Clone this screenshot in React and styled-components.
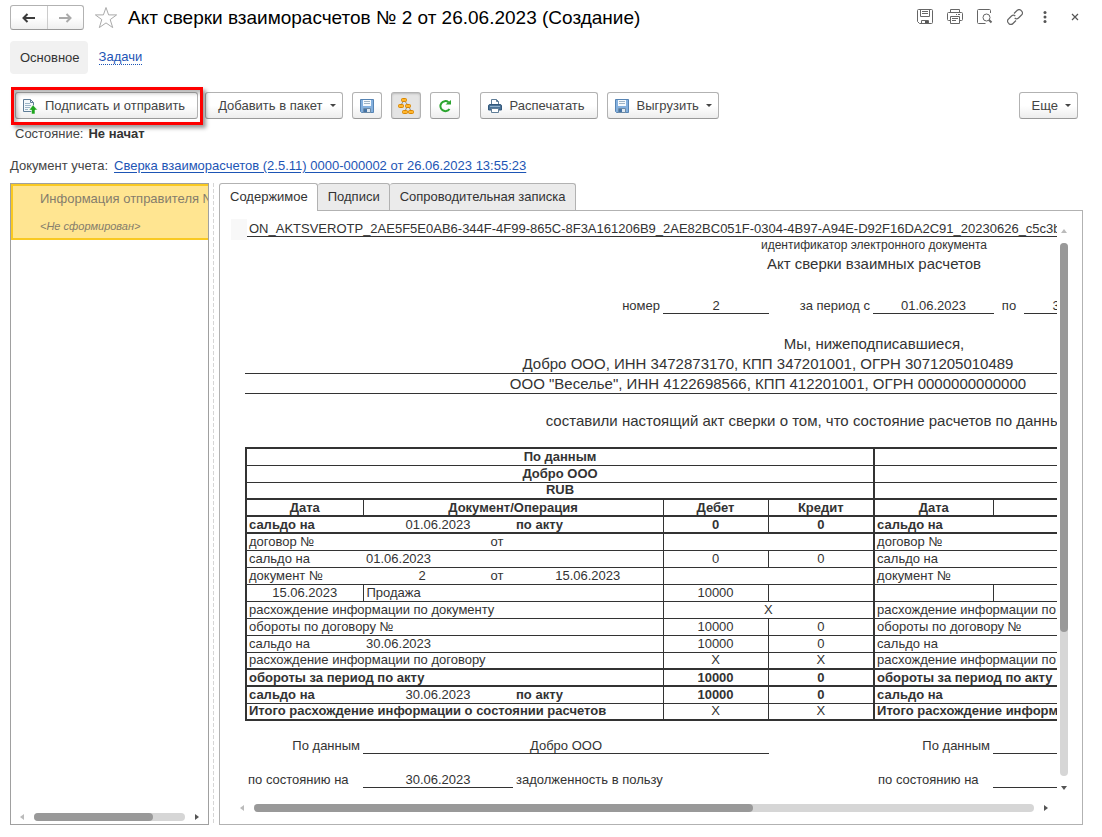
import React from 'react';
import styled, { createGlobalStyle, css } from 'styled-components';

const colorText = '#444444';
const colorSheet = '#333333';
const colorLink = '#1d55b5';
const colorBorder = '#b2b2b2';

const GlobalStyle = createGlobalStyle`
  * {
    box-sizing: border-box;
  }

  body {
    margin: 0;
    background: #ffffff;
    color: ${colorText};
    font-family: 'Liberation Sans', Arial, sans-serif;
    font-size: 13px;
  }

  button {
    font-family: inherit;
    color: inherit;
  }
`;

const Page = styled.div`
  display: flex;
  flex-direction: column;
  height: 100vh;
  min-height: 600px;
  padding: 5px 19px 12px 10px;
`;

// Title bar
const Header = styled.header`
  display: flex;
  align-items: center;
  height: 25px;
`;

const NavGroup = styled.div`
  display: flex;
  width: 74px;
  height: 25px;
  border: 1px solid ${colorBorder};
  border-bottom-color: #999999;
  border-radius: 3px;
  background: linear-gradient(#ffffff 50%, #efefef);
`;

const NavButton = styled.button`
  display: flex;
  flex: 1;
  align-items: center;
  justify-content: center;
  padding: 0;
  border: 0;
  background: none;

  & + & {
    border-left: 1px solid #cccccc;
  }
`;

const StarButton = styled.button`
  display: flex;
  margin: 0 10px;
  padding: 0;
  border: 0;
  background: none;
`;

const Title = styled.h1`
  flex: 1;
  margin: 0;
  color: #000000;
  font-size: 19px;
  font-weight: normal;
  line-height: 24px;
  white-space: nowrap;
`;

const HeaderTools = styled.div`
  display: flex;
  gap: 10px;
  margin: 0 -2px 2px 0;
`;

const HeaderTool = styled.button`
  display: flex;
  align-items: center;
  justify-content: center;
  width: 20px;
  height: 20px;
  padding: 0;
  border: 0;
  background: none;
`;

// Form navigation
const Sections = styled.nav`
  display: flex;
  align-items: center;
  gap: 11px;
  margin-top: 11px;
`;

const SectionCurrent = styled.span`
  padding: 0 8px 0 10px;
  border-radius: 4px;
  background: #f1f1f1;
  color: #333333;
  line-height: 33px;
`;

const SectionLink = styled.a`
  border-bottom: 1px dotted ${colorLink};
  color: ${colorLink};
  line-height: 14px;
  text-decoration: none;
`;

// Command bar
const Toolbar = styled.div`
  display: flex;
  gap: 9px;
  margin-top: 18px;
  padding: 0 5px;
`;

const ToolButton = styled.button`
  display: flex;
  align-items: center;
  justify-content: center;
  gap: 7px;
  height: 27px;
  padding: 0 ${({ $icon }) => ($icon ? '6px' : '12px')};
  border: 1px solid ${colorBorder};
  border-bottom-color: #999999;
  border-radius: 3px;
  background: linear-gradient(#ffffff 50%, #ededed);
  font-size: 13px;
  white-space: nowrap;

  ${({ $wide }) =>
    $wide &&
    css`
      padding-right: 12px;
    `}

  ${({ $menu }) =>
    $menu &&
    css`
      padding-right: 6px;
    `}

  ${({ $pressed }) =>
    $pressed &&
    css`
      background: #e4e4e4;
      box-shadow: inset 0 1px 2px #bbbbbb;
    `}
`;

const Caret = styled.span`
  border: 3px solid transparent;
  border-top-color: #444444;
  border-bottom-width: 0;
`;

const Highlighted = styled.div`
  position: relative;
  display: flex;
  margin-right: -2px;

  &::after {
    content: '';
    position: absolute;
    inset: -5px -5px -6px -4px;
    border: 3px solid #fe0000;
    box-shadow: 3px 3px 4px rgba(0, 0, 0, 0.4), inset 3px 3px 4px rgba(0, 0, 0, 0.3);
    pointer-events: none;
  }
`;

const ToolbarGap = styled.div`
  width: 2px;
`;

const ToolbarEnd = styled.div`
  margin-left: auto;
`;

const StateLine = styled.div`
  display: flex;
  gap: 5px;
  margin-top: 7px;
  padding-left: 5px;
  line-height: 16px;

  strong {
    color: #333333;
  }
`;

const DocumentLine = styled.div`
  display: flex;
  gap: 6px;
  margin-top: 16px;
  line-height: 16px;
  white-space: nowrap;

  a {
    color: ${colorLink};
    text-underline-offset: 2px;
  }
`;

// Working area
const Workspace = styled.main`
  display: grid;
  grid-template-columns: 199px 10px minmax(0, 1fr);
  flex: 1;
  min-height: 0;
  margin-top: 9px;
`;

const ListPanel = styled.section`
  display: flex;
  flex-direction: column;
  justify-content: space-between;
  min-width: 0;
  border: 1px solid #a0a0a0;
`;

const ListItem = styled.div`
  height: 56px;
  padding: 5px 0 0 27px;
  overflow: hidden;
  border: 2px solid #f9c922;
  border-right: 0;
  background: #ffe591;
  color: #857d6c;
  line-height: 16px;
  white-space: nowrap;

  em {
    display: block;
    margin-top: 11px;
    font-size: 11px;
  }
`;

const Splitter = styled.div`
  width: 1px;
  margin-left: 4px;
  background: repeating-linear-gradient(#d6d6d6 0 4px, transparent 4px 6px);
`;

const Content = styled.section`
  display: flex;
  flex-direction: column;
  min-width: 0;
  min-height: 0;
`;

const Tabs = styled.div`
  display: flex;
  height: 27px;
`;

const Tab = styled.button`
  height: 27px;
  padding: 0 9px 2px 10px;
  border: 1px solid ${colorBorder};
  border-bottom: 0;
  border-left-width: ${({ $active }) => ($active ? '1px' : '0')};
  border-radius: 3px 3px 0 0;
  background: #ebebeb;
  color: #333333;
  font-size: 13px;
  white-space: nowrap;

  ${({ $active }) =>
    $active &&
    css`
      z-index: 1;
      height: 28px;
      background: #ffffff;
    `}
`;

const SheetFrame = styled.div`
  display: grid;
  grid-template-columns: minmax(0, 1fr) 14px;
  grid-template-rows: minmax(0, 1fr) 28px;
  flex: 1;
  min-height: 0;
  padding: 8px 11px 2px;
  border: 1px solid ${colorBorder};
`;

const Viewport = styled.div`
  overflow: hidden;
`;

// Scroll bars
const Scrollbar = styled.div`
  display: flex;
  flex-direction: ${({ $vertical }) => ($vertical ? 'column' : 'row')};
  align-items: center;
  gap: 10px;
  padding: ${({ $vertical }) => ($vertical ? '10px 0 4px' : '0 9px')};
`;

const ListScrollbar = styled(Scrollbar)`
  height: 14px;
`;

const ScrollTrack = styled.div`
  flex: 1;
  width: ${({ $vertical }) => ($vertical ? '8px' : 'auto')};
  height: ${({ $vertical }) => ($vertical ? 'auto' : '8px')};
  border-radius: 4px;
  background: #d6d6d6;
`;

const ScrollThumb = styled.div`
  width: ${({ $vertical, $size }) => ($vertical ? '8px' : $size)};
  height: ${({ $vertical, $size }) => ($vertical ? $size : '8px')};
  border-radius: 4px;
  background: #999999;
`;

const arrowShapes = {
  left: 'M4 0v6L0 3z',
  right: 'M0 0v6l4-3z',
  up: 'M0 4h6L3 0z',
  down: 'M0 0h6L3 4z',
};

const ScrollArrow = ({ side, muted }) => {
  const vertical = side === 'up' || side === 'down';
  return (
    <svg width={vertical ? 6 : 4} height={vertical ? 4 : 6} aria-hidden="true">
      <path d={arrowShapes[side]} fill={muted ? '#bbbbbb' : '#555555'} />
    </svg>
  );
};

// Printed form
const Sheet = styled.article`
  width: 1272px;
  padding-left: 14px;
  color: ${colorSheet};
`;

const SheetLine = styled.div`
  height: ${({ $height }) => $height || 20}px;
  margin-top: ${({ $gap }) => $gap || 0}px;
  font-size: 15px;
  line-height: 19px;
  text-align: center;
  white-space: nowrap;
`;

const SheetId = styled(SheetLine)`
  position: relative;
  border-bottom: 1px solid ${colorSheet};
  padding-left: 4px;
  font-size: 13px;
  text-align: left;

  &::before {
    content: '';
    position: absolute;
    top: 0;
    left: -14px;
    width: 16px;
    height: 21px;
    background: #f8f8f8;
  }
`;

const SheetCaption = styled(SheetLine)`
  font-size: 12px;
  line-height: 16px;
`;

const Party = styled(SheetLine)`
  width: 1046px;
  border-bottom: 1px solid ${colorSheet};
`;

const Fields = styled.div`
  display: grid;
  grid-template-columns: ${({ $columns }) => $columns};
  margin-top: ${({ $gap }) => $gap}px;
  line-height: 19px;
  white-space: nowrap;
`;

const Field = styled.span`
  height: 18px;
  padding: 0 3px;
  text-align: ${({ $align }) => $align || 'left'};
  border-bottom: ${({ $line }) => ($line ? `1px solid ${colorSheet}` : '0')};
`;

const Ledger = styled.table`
  width: 1258px;
  margin-top: 16px;
  border: 2px solid ${colorSheet};
  border-collapse: collapse;
  table-layout: fixed;
  font-size: 13px;
  line-height: 14px;
`;

const Row = styled.tr`
  height: 17px;
  border-top: ${({ $thick }) => ($thick ? '2px' : '1px')} solid ${colorSheet};
`;

const Cell = styled.td`
  padding: 0 ${({ $edge }) => ($edge ? '2px' : '3px')};
  font-weight: ${({ $bold }) => ($bold ? 'bold' : 'normal')};
  text-align: ${({ $align }) => $align || 'left'};
  white-space: nowrap;
  border-left: ${({ $edge, $line }) => {
    if ($edge) return `2px solid ${colorSheet}`;
    return $line ? `1px solid ${colorSheet}` : '0';
  }};
`;

const columnWidths = [117, 118, 32, 150, 105, 106, 119, 118, 32, 150, 105, 104];

// Short builders for the cells of one half of the table
const left = (text, span = 1, extra) => ({ text, span, ...extra });
const mid = (text, span = 1, extra) => ({ text, span, align: 'center', ...extra });
const sum = (text, span = 1, extra) => mid(text, span, { line: true, ...extra });
const bold = { bold: true };

const ledgerRows = ({ from, to, number, date, operation, amount, zero }) => [
  { thick: true, cells: [left('сальдо на', 1, bold), mid(from, 2), left(from && 'по акту', 1, bold), sum(zero, 1, bold), sum(zero, 1, bold)] },
  { thick: true, cells: [left('договор №'), mid(''), mid(from && 'от'), mid(''), sum('', 2)] },
  { cells: [left('сальдо на'), left(from, 3), sum(zero), sum(zero)] },
  { cells: [left('документ №'), mid(number), mid(from && 'от'), mid(date), sum('', 2)] },
  { cells: [mid(date), left(operation, 3, { line: true }), sum(amount), sum('')] },
  { cells: [left('расхождение информации по документу', 4), sum(from && 'X', 2)] },
  { cells: [left('обороты по договору №', 4), sum(amount), sum(zero)] },
  { cells: [left('сальдо на'), left(to, 3), sum(amount), sum(zero)] },
  { cells: [left('расхождение информации по договору', 4), sum(from && 'X'), sum(from && 'X')] },
  { thick: true, cells: [left('обороты за период по акту', 4, bold), sum(amount, 1, bold), sum(zero, 1, bold)] },
  { thick: true, cells: [left('сальдо на', 1, bold), mid(to, 2), left(to && 'по акту', 1, bold), sum(amount, 1, bold), sum(zero, 1, bold)] },
  { cells: [left('Итого расхождение информации о состоянии расчетов', 4, bold), sum(from && 'X'), sum(from && 'X')] },
];

const ourRows = [
  { thick: true, cells: [mid('По данным', 6, bold)] },
  { cells: [mid('Добро ООО', 6, bold)] },
  { cells: [mid('RUB', 6, bold)] },
  { thick: true, cells: [mid('Дата', 1, bold), sum('Документ/Операция', 3, bold), sum('Дебет', 1, bold), sum('Кредит', 1, bold)] },
  ...ledgerRows({
    from: '01.06.2023',
    to: '30.06.2023',
    number: '2',
    date: '15.06.2023',
    operation: 'Продажа',
    amount: '10000',
    zero: '0',
  }),
];

// The other side has not filled in its half yet
const theirRows = [
  { cells: [mid('', 6)] },
  { cells: [mid('', 6)] },
  { cells: [mid('', 6)] },
  { cells: [mid('Дата', 1, bold), sum('', 3), sum(''), sum('')] },
  ...ledgerRows({ from: '', to: '', number: '', date: '', operation: '', amount: '', zero: '' }),
];

const renderCells = (cells, half) =>
  cells.map((cell, index) => (
    <Cell
      key={`${half}-${index}`}
      colSpan={cell.span}
      $edge={index === 0}
      $line={cell.line}
      $bold={cell.bold}
      $align={cell.align}
    >
      {cell.text}
    </Cell>
  ));

const LedgerTable = () => (
  <Ledger>
    <colgroup>
      {columnWidths.map((width, index) => (
        <col key={index} width={width} />
      ))}
    </colgroup>
    <tbody>
      {ourRows.map((row, index) => (
        <Row key={index} $thick={row.thick}>
          {renderCells(row.cells, 'our')}
          {renderCells(theirRows[index].cells, 'their')}
        </Row>
      ))}
    </tbody>
  </Ledger>
);

// Icons
const ArrowIcon = ({ back }) => (
  <svg width="16" height="12" viewBox="0 0 16 12" aria-hidden="true">
    {back ? (
      <path d="M6.500 2L2.500 6l4 4M2.500 6H14" fill="none" stroke="#3c3c3c" strokeWidth="2" />
    ) : (
      <path d="M9.500 2l4 4-4 4M13.500 6H2" fill="none" stroke="#aaaaaa" strokeWidth="2" />
    )}
  </svg>
);

const StarIcon = () => (
  <svg width="24" height="24" viewBox="0 0 24 24" aria-hidden="true">
    <path
      d="M12 1.500l2.600 7.400h8L16.200 13.600l2.500 8L12 16.900l-6.700 4.700 2.500-8L1.400 8.900h8z"
      fill="none"
      stroke="#aaaaaa"
      strokeWidth="1"
    />
  </svg>
);

const SaveOutlineIcon = () => (
  <svg width="16" height="16" viewBox="0 0 16 16" fill="none" stroke="#666666" aria-hidden="true">
    <path d="M1.500 0.500h13a1 1 0 0 1 1 1v12a1 1 0 0 1-1 1h-12l-2-2v-11a1 1 0 0 1 1-1z" />
    <path d="M3.500 0.500v7h9v-7M5 2.500h6M5 4.500h6M4.500 14.500v-3h7v3" />
    <path d="M8 12h3v2H8z" fill="#555555" stroke="none" />
  </svg>
);

const PrintOutlineIcon = () => (
  <svg width="16" height="16" viewBox="0 0 16 16" fill="none" stroke="#666666" aria-hidden="true">
    <path d="M3.500 3.500v-3h9v3M3.500 11.500h-2a1 1 0 0 1-1-1v-6a1 1 0 0 1 1-1h13a1 1 0 0 1 1 1v6a1 1 0 0 1-1 1h-2" />
    <path d="M3.500 7.500h9v7h-9zM5 9.500h6M5 11.500h4M9 5.500h1M11 5.500h2" />
  </svg>
);

const PreviewIcon = () => (
  <svg width="16" height="16" viewBox="0 0 16 16" fill="none" stroke="#666666" aria-hidden="true">
    <path d="M13.500 4v-2.500a1 1 0 0 0-1-1h-11a1 1 0 0 0-1 1v12a1 1 0 0 0 1 1h7" />
    <circle cx="9.500" cy="8.500" r="3.500" />
    <path d="M12 11l2.500 2.500" strokeWidth="2" />
  </svg>
);

const LinkIcon = () => (
  <svg width="16" height="16" viewBox="0 0 16 16" fill="none" stroke="#666666" strokeWidth="1.200" aria-hidden="true">
    <path d="M7 4.500l3-3a2.700 2.700 0 0 1 4.300 0.200 2.700 2.700 0 0 1 0.200 4.300l-3 3a2.700 2.700 0 0 1-3.800 0" />
    <path d="M9 11.500l-3 3a2.700 2.700 0 0 1-4.300-0.200A2.700 2.700 0 0 1 1.500 10l3-3a2.700 2.700 0 0 1 3.800 0" />
  </svg>
);

const DotsIcon = () => (
  <svg width="4" height="12" viewBox="0 0 4 12" fill="#555555" aria-hidden="true">
    <circle cx="2" cy="1.500" r="1.500" />
    <circle cx="2" cy="6" r="1.500" />
    <circle cx="2" cy="10.500" r="1.500" />
  </svg>
);

const CloseIcon = () => (
  <svg width="8" height="8" viewBox="0 0 8 8" aria-hidden="true">
    <path d="M1 1l6 6M7 1l-6 6" stroke="#555555" strokeWidth="1.200" />
  </svg>
);

const SendIcon = () => (
  <svg width="16" height="16" viewBox="0 0 16 16" aria-hidden="true">
    <path d="M1.500 1.500h7l3 3v9h-10z" fill="#f4f8fb" stroke="#5f7d97" />
    <path d="M8.500 1.500v3h3" fill="none" stroke="#5f7d97" />
    <path d="M3 5.500h5M3 7.500h6M3 9.500h5M3 11.500h3" stroke="#9db5c8" />
    <path d="M11 7l4.500 5H13v4H9.500v-4H7z" fill="#1fa51f" stroke="#ffffff" strokeWidth="0.500" />
  </svg>
);

const FloppyIcon = () => (
  <svg width="16" height="16" viewBox="0 0 16 16" aria-hidden="true">
    <path d="M1.500 1.500h13v13h-12l-1-1z" fill="#84b0de" stroke="#5684b4" />
    <path d="M4 2h8v6H4z" fill="#f6fafd" />
    <path d="M5 3.500h6M5 5.500h6" stroke="#9fb4c6" />
    <path d="M4.500 10.500h7v4h-7z" fill="#dfe8f0" stroke="#6c8aa6" />
    <path d="M5 11h3v3H5z" fill="#4473a6" />
  </svg>
);

const StructureIcon = () => (
  <svg width="16" height="16" viewBox="0 0 16 16" aria-hidden="true">
    <path d="M5.500 3L3 7M6.500 3l3.500 4M9.500 8L7 13M10.500 8l2.500 5" stroke="#8c8c8c" fill="none" />
    <g fill="#ffb62e" stroke="#d98600">
      <rect x="3.500" y="0.500" width="5" height="3" rx="1" />
      <rect x="0.500" y="6.500" width="5" height="3" rx="1" />
      <rect x="7.500" y="6.500" width="5" height="3" rx="1" />
      <rect x="4.500" y="12.500" width="5" height="3" rx="1" />
      <rect x="10.500" y="12.500" width="5" height="3" rx="1" />
    </g>
  </svg>
);

const RefreshIcon = () => (
  <svg width="16" height="16" viewBox="0 0 16 16" aria-hidden="true">
    <path d="M12.500 11A5 5 0 1 1 11.500 4.200" fill="none" stroke="#2ba52f" strokeWidth="2" />
    <path d="M8.500 6.500H14V2z" fill="#2ba52f" />
  </svg>
);

const PrinterIcon = () => (
  <svg width="16" height="16" viewBox="0 0 16 16" aria-hidden="true">
    <path d="M4.500 7V1.500h5l2 2V7" fill="#ffffff" stroke="#5f7d97" />
    <path d="M9.500 1.500v2h2" fill="none" stroke="#5f7d97" />
    <path d="M3 6.500h10a1.500 1.500 0 0 1 1.500 1.500v4h-13v-4a1.500 1.500 0 0 1 1.500-1.500z" fill="#4b7296" stroke="#34597c" />
    <path d="M3 8.500h10" stroke="#8fb0cb" />
    <path d="M4.500 10.500h7v4h-7z" fill="#ffffff" stroke="#5f7d97" />
  </svg>
);

const HalfTotals = ({ company }) => (
  <Fields $gap={0} $columns="118px 406px 105px">
    <Field $align="right">По данным</Field>
    <Field $align="center" $line>{company}</Field>
  </Fields>
);

const HalfDebt = ({ date, text }) => (
  <Fields $gap={0} $columns="118px 150px 361px">
    <Field>по состоянию на</Field>
    <Field $align="center" $line>{date}</Field>
    <Field>{text}</Field>
  </Fields>
);

const PrintedForm = () => (
  <Sheet>
    <SheetId $height={18}>
      ON_AKTSVEROTP_2AE5F5E0AB6-344F-4F99-865C-8F3A161206B9_2AE82BC051F-0304-4B97-A94E-D92F16DA2C91_20230626_c5c3b63
    </SheetId>
    <SheetCaption $height={17}>идентификатор электронного документа</SheetCaption>
    <SheetLine>Акт сверки взаимных расчетов</SheetLine>
    <Fields $gap={22} $columns="418px 106px 104px 121px 30px 122px">
      <Field $align="right">номер</Field>
      <Field $align="center" $line>2</Field>
      <Field $align="right">за период с</Field>
      <Field $align="center" $line>01.06.2023</Field>
      <Field $align="center">по</Field>
      <Field $align="center" $line>30.06.2023</Field>
    </Fields>
    <SheetLine $gap={20}>Мы, нижеподписавшиеся,</SheetLine>
    <Party>Добро ООО, ИНН 3472873170, КПП 347201001, ОГРН 3071205010489</Party>
    <Party>ООО "Веселье", ИНН 4122698566, КПП 412201001, ОГРН 0000000000000</Party>
    <SheetLine $gap={17}>
      составили настоящий акт сверки о том, что состояние расчетов по данным учета следующее:
    </SheetLine>
    <LedgerTable />
    <Fields $gap={15} $columns="630px 628px">
      <HalfTotals company="Добро ООО" />
      <HalfTotals />
    </Fields>
    <Fields $gap={16} $columns="630px 628px">
      <HalfDebt date="30.06.2023" text="задолженность в пользу" />
      <HalfDebt />
    </Fields>
  </Sheet>
);

const App = () => {
  return (
    <>
      <GlobalStyle />
      <Page>
        <Header>
          <NavGroup>
            <NavButton aria-label="Назад"><ArrowIcon back /></NavButton>
            <NavButton aria-label="Вперед"><ArrowIcon /></NavButton>
          </NavGroup>
          <StarButton aria-label="Избранное"><StarIcon /></StarButton>
          <Title>Акт сверки взаиморасчетов № 2 от 26.06.2023 (Создание)</Title>
          <HeaderTools>
            <HeaderTool aria-label="Сохранить"><SaveOutlineIcon /></HeaderTool>
            <HeaderTool aria-label="Печать"><PrintOutlineIcon /></HeaderTool>
            <HeaderTool aria-label="Просмотр"><PreviewIcon /></HeaderTool>
            <HeaderTool aria-label="Ссылка"><LinkIcon /></HeaderTool>
            <HeaderTool aria-label="Меню"><DotsIcon /></HeaderTool>
            <HeaderTool aria-label="Закрыть"><CloseIcon /></HeaderTool>
          </HeaderTools>
        </Header>
        <Sections>
          <SectionCurrent>Основное</SectionCurrent>
          <SectionLink href="#tasks">Задачи</SectionLink>
        </Sections>
        <Toolbar>
          <Highlighted>
            <ToolButton $wide $icon><SendIcon />Подписать и отправить</ToolButton>
          </Highlighted>
          <ToolButton $menu>Добавить в пакет<Caret /></ToolButton>
          <ToolButton $icon aria-label="Записать"><FloppyIcon /></ToolButton>
          <ToolButton $icon $pressed aria-label="Структура"><StructureIcon /></ToolButton>
          <ToolButton $icon aria-label="Обновить"><RefreshIcon /></ToolButton>
          <ToolbarGap />
          <ToolButton $wide $icon><PrinterIcon />Распечатать</ToolButton>
          <ToolButton $menu $icon><FloppyIcon />Выгрузить<Caret /></ToolButton>
          <ToolbarEnd>
            <ToolButton $menu>Еще<Caret /></ToolButton>
          </ToolbarEnd>
        </Toolbar>
        <StateLine>
          <span>Состояние:</span>
          <strong>Не начат</strong>
        </StateLine>
        <DocumentLine>
          <span>Документ учета:</span>
          <a href="#document">Сверка взаиморасчетов (2.5.11) 0000-000002 от 26.06.2023 13:55:23</a>
        </DocumentLine>
        <Workspace>
          <ListPanel>
            <ListItem>
              Информация отправителя №
              <em>&lt;Не сформирован&gt;</em>
            </ListItem>
            <ListScrollbar>
              <ScrollArrow side="left" muted />
              <ScrollTrack><ScrollThumb $size="79%" /></ScrollTrack>
              <ScrollArrow side="right" />
            </ListScrollbar>
          </ListPanel>
          <Splitter />
          <Content>
            <Tabs role="tablist">
              <Tab role="tab" aria-selected="true" $active>Содержимое</Tab>
              <Tab role="tab" aria-selected="false">Подписи</Tab>
              <Tab role="tab" aria-selected="false">Сопроводительная записка</Tab>
            </Tabs>
            <SheetFrame>
              <Viewport>
                <PrintedForm />
              </Viewport>
              <Scrollbar $vertical>
                <ScrollArrow side="up" muted />
                <ScrollTrack $vertical><ScrollThumb $vertical $size="73%" /></ScrollTrack>
                <ScrollArrow side="down" />
              </Scrollbar>
              <Scrollbar>
                <ScrollArrow side="left" muted />
                <ScrollTrack><ScrollThumb $size="64%" /></ScrollTrack>
                <ScrollArrow side="right" />
              </Scrollbar>
            </SheetFrame>
          </Content>
        </Workspace>
      </Page>
    </>
  );
};

export default App;
